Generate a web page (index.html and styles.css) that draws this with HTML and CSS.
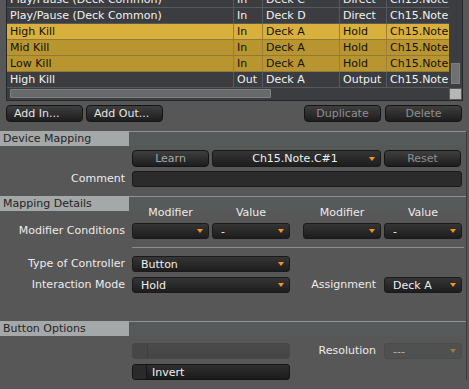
FILE: index.html
```html
<!DOCTYPE html>
<html>
<head>
<meta charset="utf-8">
<title>Mapping</title>
<link rel="stylesheet" href="styles.css">
</head>
<body>
<div class="app">
  <div class="table-wrap">
    <div class="table-main">
      <div class="rows">
        <div class="rows-inner">
          <div class="row"><span class="c c-name">Play/Pause (Deck Common)</span><span class="c c-io">In</span><span class="c c-deck">Deck C</span><span class="c c-mode">Direct</span><span class="c c-note">Ch15.Note</span></div>
          <div class="row"><span class="c c-name">Play/Pause (Deck Common)</span><span class="c c-io">In</span><span class="c c-deck">Deck D</span><span class="c c-mode">Direct</span><span class="c c-note">Ch15.Note</span></div>
          <div class="row sel"><span class="c c-name">High Kill</span><span class="c c-io">In</span><span class="c c-deck">Deck A</span><span class="c c-mode">Hold</span><span class="c c-note">Ch15.Note</span></div>
          <div class="row sel2"><span class="c c-name">Mid Kill</span><span class="c c-io">In</span><span class="c c-deck">Deck A</span><span class="c c-mode">Hold</span><span class="c c-note">Ch15.Note</span></div>
          <div class="row sel2"><span class="c c-name">Low Kill</span><span class="c c-io">In</span><span class="c c-deck">Deck A</span><span class="c c-mode">Hold</span><span class="c c-note">Ch15.Note</span></div>
          <div class="row"><span class="c c-name">High Kill</span><span class="c c-io">Out</span><span class="c c-deck">Deck A</span><span class="c c-mode">Output</span><span class="c c-note">Ch15.Note</span></div>
        </div>
      </div>
      <div class="hscroll"><div class="hthumb"></div></div>
    </div>
    <div class="vscroll">
      <div class="vtrack"><div class="vthumb"></div></div>
      <div class="corner"><div class="corner-box"></div></div>
    </div>
  </div>

  <div class="btnbar">
    <div class="btn btn-left">Add In...</div>
    <div class="btn btn-left">Add Out...</div>
    <div class="btn btn-dim btn-push">Duplicate</div>
    <div class="btn btn-dim">Delete</div>
  </div>

  <div class="form-area">
  <section class="sec sec-device">
    <div class="sec-head"><div class="sec-title">Device Mapping</div><div class="sec-rule"></div></div>
    <div class="frow r-learn">
      <div class="btn btn-dim2 col-a">Learn</div>
      <div class="dd dd-center col-bcd"><span class="dd-text">Ch15.Note.C#1</span><span class="arrow"></span></div>
      <div class="btn btn-dim col-e">Reset</div>
    </div>
    <div class="frow r-comment">
      <div class="lbl">Comment</div>
      <div class="field col-all"></div>
    </div>
  </section>

  <section class="sec sec-details">
    <div class="sec-head"><div class="sec-title">Mapping Details</div><div class="sec-rule"></div></div>
    <div class="frow r-heads">
      <div class="colhead col-a">Modifier</div>
      <div class="colhead col-b">Value</div>
      <div class="colhead col-d">Modifier</div>
      <div class="colhead col-e">Value</div>
    </div>
    <div class="frow r-mod">
      <div class="lbl">Modifier Conditions</div>
      <div class="dd col-a"><span class="dd-text"></span><span class="arrow"></span></div>
      <div class="dd col-b"><span class="dd-text">-</span><span class="arrow"></span></div>
      <div class="dd col-d"><span class="dd-text"></span><span class="arrow"></span></div>
      <div class="dd col-e"><span class="dd-text">-</span><span class="arrow"></span></div>
    </div>
    <div class="sep"></div>
    <div class="frow r-type">
      <div class="lbl">Type of Controller</div>
      <div class="dd col-ab"><span class="dd-text">Button</span><span class="arrow"></span></div>
    </div>
    <div class="frow r-mode">
      <div class="lbl">Interaction Mode</div>
      <div class="dd col-ab"><span class="dd-text">Hold</span><span class="arrow"></span></div>
      <div class="lbl lbl-mid">Assignment</div>
      <div class="dd col-e"><span class="dd-text">Deck A</span><span class="arrow"></span></div>
    </div>
  </section>

  <section class="sec sec-options">
    <div class="sec-head"><div class="sec-title">Button Options</div><div class="sec-rule"></div></div>
    <div class="frow r-slider">
      <div class="chk chk-off col-ab"><span class="box"></span></div>
      <div class="lbl lbl-mid">Resolution</div>
      <div class="dd dd-off col-e"><span class="dd-text">---</span><span class="arrow"></span></div>
    </div>
    <div class="frow r-invert">
      <div class="chk col-ab"><span class="box"></span><span class="chk-text">Invert</span></div>
    </div>
  </section>
  </div>
</div>
</body>
</html>
```
FILE: styles.css
```css
* { box-sizing: border-box; margin: 0; padding: 0; }

html, body { background: #575757; }

body {
  width: 469px;
  height: 389px;
  overflow: hidden;
  font-family: "DejaVu Sans", "Liberation Sans", sans-serif;
  font-size: 11px;
  color: #ececec;
}

.app { width: 469px; }

/* ---------- table ---------- */
.table-wrap {
  margin-left: 6px;
  width: 457px;
  height: 101px;
  display: flex;
  background: #3b3d40;
  border-left: 1px solid #262729;
  border-right: 1px solid #262729;
  border-bottom: 1px solid #262729;
  overflow: hidden;
}
.table-main { width: 442px; display: flex; flex-direction: column; }
.rows { height: 88px; overflow: hidden; }
.rows-inner { margin-top: -8px; }
.row {
  display: flex;
  height: 16px;
  line-height: 16px;
  border-bottom: 1px solid #57595c;
  color: #f2f2f2;
}
.c {
  height: 15px;
  padding-left: 3px;
  border-right: 1px solid #57595c;
  white-space: nowrap;
  overflow: hidden;
}
.c-name { width: 227px; }
.c-io { width: 29px; }
.c-deck { width: 77px; }
.c-mode { width: 47px; }
.c-note { width: 62px; border-right: 0; }

.row.sel { background: #d8b03b; color: #111; border-bottom-color: #8f7a3c; }
.row.sel2 { background: #b8952f; color: #111; border-bottom-color: #8f7a3c; }
.row.sel .c, .row.sel2 .c { border-right-color: #9a8038; }

.hscroll {
  height: 12px;
  background: #3b3d40;
  padding: 1px 0 2px 3px;
}
.hthumb {
  width: 261px;
  height: 9px;
  background: #67696b;
  border: 1px solid #7d7f81;
  border-radius: 1px;
}

.vscroll {
  width: 13px;
  display: flex;
  flex-direction: column;
  background: #3b3d40;
}
.vtrack {
  height: 88px;
  display: flex;
  flex-direction: column;
  justify-content: flex-end;
  padding: 0 2px 4px 2px;
}
.vthumb { height: 21px; background: #6e7072; border: 1px solid #7c7e80; }
.corner { height: 12px; padding: 1px; background: #5a5a5a; }
.corner-box { height: 10px; background: #b6b6b6; }

/* ---------- buttons ---------- */
.btnbar {
  display: flex;
  gap: 3px;
  margin: 4px 0 0 6px;
  width: 456px;
  height: 17px;
}
.btn {
  width: 77px;
  height: 17px;
  border-radius: 4px;
  background: linear-gradient(#3f3f3f, #1d1d1d);
  border: 1px solid #141414;
  color: #e6e6e6;
  display: flex;
  align-items: center;
  justify-content: center;
  white-space: nowrap;
}
.btn-left { justify-content: flex-start; padding-left: 7px; }
.btn-dim { color: #8f8f8f; }
.btn-dim2 { color: #a8a8a8; }
.btn-push { margin-left: auto; margin-right: 1px; }

/* ---------- sections ---------- */
.form-area {
  width: 467px;
  border-right: 1px solid #3a3c3c;
  margin-top: 9px;
}
.sec-head { display: flex; height: 15px; }
.sec-title {
  width: 129px;
  background: #a4a8a8;
  color: #242424;
  padding-left: 3px;
  line-height: 15px;
  white-space: nowrap;
}
.sec-rule { flex: 1; border-top: 1px solid #8e9292; background: #565a5a; }

.sec-details { margin-top: 9px; }
.sec-options { margin-top: 28px; }

.frow {
  display: grid;
  grid-template-columns: 129px 77px 78px 7px 78px 78px;
  column-gap: 3px;
  height: 16px;
  align-items: stretch;
}
.lbl {
  grid-column: 1;
  text-align: right;
  padding-right: 4px;
  line-height: 16px;
  white-space: nowrap;
}
.lbl-mid { grid-column: 4 / 6; padding-right: 5px; }

.col-a { grid-column: 2; }
.col-b { grid-column: 3; }
.col-d { grid-column: 5; }
.col-e { grid-column: 6; }
.col-ab { grid-column: 2 / 4; }
.col-bcd { grid-column: 3 / 6; }
.col-all { grid-column: 2 / 7; }

.r-learn { margin-top: 4px; }
.r-comment { margin-top: 5px; }
.r-heads { margin-top: -6px; }
.r-mod { margin-top: 2px; }
.r-type { margin-top: 8px; }
.r-mode { margin-top: 5px; }
.r-slider { margin-top: 7px; }
.r-invert { margin-top: 5px; }

.colhead { text-align: center; line-height: 16px; }

.sep {
  margin: 8px 2px 0 132px;
  height: 1px;
  background: #8c8c8c;
}

/* dropdown */
.dd {
  display: flex;
  align-items: center;
  border-radius: 3px;
  background: linear-gradient(#353535, #1d1d1d);
  border: 1px solid #1a1a1a;
  padding: 0 5px 0 8px;
  color: #f0f0f0;
  white-space: nowrap;
}
.dd-text { flex: 1; }
.dd-center .dd-text { text-align: center; }
.arrow {
  width: 0;
  height: 0;
  border-left: 3.5px solid transparent;
  border-right: 3.5px solid transparent;
  border-top: 4px solid #f7941e;
}
.dd-off { background: #4f5151; border-color: #4a4c4c; color: #b4b4b4; }
.dd-off .arrow { border-top-color: #9c7a45; }

/* comment field */
.field {
  border-radius: 3px;
  background: #2b2b2b;
  border: 1px solid #1a1a1a;
}

/* checkbox bars */
.chk {
  display: flex;
  align-items: center;
  border-radius: 3px;
  background: linear-gradient(#2f2f2f, #1b1b1b);
  border: 1px solid #151515;
  overflow: hidden;
}
.chk .box {
  width: 14px;
  height: 100%;
  background: #2a2a2a;
  border-right: 1px solid #141414;
}
.chk-text { padding-left: 5px; color: #f0f0f0; }
.chk-off { background: linear-gradient(#4b4b4b, #454545); border-color: #474747; }
.chk-off .box { width: 15px; background: #474747; border-right-color: #3e3e3e; }
```
